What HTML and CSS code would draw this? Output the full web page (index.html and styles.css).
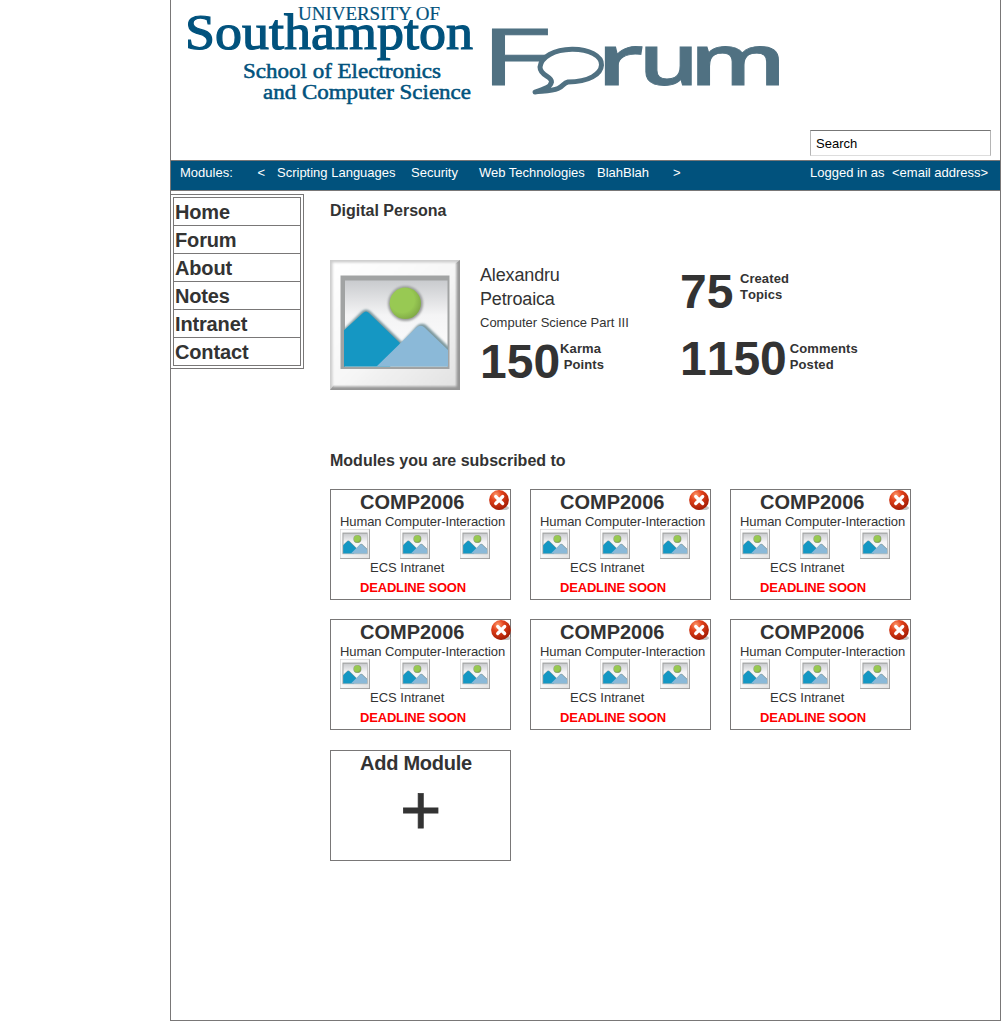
FILE: index.html
```html
<!DOCTYPE html>
<html lang="en">
<head>
<meta charset="utf-8">
<title>Forum - Digital Persona</title>
<link rel="stylesheet" href="styles.css">
</head>
<body>
<svg class="defs" aria-hidden="true">
  <defs>
    <linearGradient id="frame" x1="0" y1="0" x2="1" y2="1"><stop offset="0" stop-color="#fff"/><stop offset=".5" stop-color="#f7f7f7"/><stop offset="1" stop-color="#e2e2e2"/></linearGradient>
    <linearGradient id="sky" x1="0" y1="0" x2="0" y2="1"><stop offset="0" stop-color="#c9cbce"/><stop offset=".4" stop-color="#f4f4f5"/><stop offset="1" stop-color="#fff"/></linearGradient>
    <radialGradient id="sun" cx=".4" cy=".4" r=".65"><stop offset=".6" stop-color="#98c953"/><stop offset="1" stop-color="#7fa845"/></radialGradient>
    <radialGradient id="red" cx=".35" cy=".25" r=".75"><stop offset="0" stop-color="#ff9a6c"/><stop offset=".4" stop-color="#e2421c"/><stop offset="1" stop-color="#a51c04"/></radialGradient>
    <filter id="soft" x="-20%" y="-20%" width="140%" height="140%"><feGaussianBlur stdDeviation="1.2"/></filter>
    <clipPath id="window"><path d="M14 20H118V106.500H14z"/></clipPath>
    <clipPath id="outer"><path d="M0 0H130V130H0z"/></clipPath>
  </defs>
  <symbol id="picture" viewBox="0 0 130 130">
    <path fill="#cdcdcd" d="M0 0H130V130H0z"/>
    <path fill="#969696" d="M130 0V130H0l4-5H125V4z"/>
    <path fill="url(#frame)" filter="url(#soft)" clip-path="url(#outer)" d="M2.500 2.500H126.500V126.500H2.500z"/>
    <path fill="#a1a3a3" d="M10.500 15.500H119.500V109H10.500z"/>
    <path fill="url(#sky)" d="M15 20.500H117.500V107H15z"/>
    <circle cx="75.500" cy="43.500" r="17.500" fill="#9b9d9d" filter="url(#soft)"/>
    <circle cx="75.300" cy="43.300" r="15.700" fill="url(#sun)"/>
    <g clip-path="url(#window)">
      <path fill="#7e999f" filter="url(#soft)" d="M10 73L32 51Q36 48 40 51L72 82L84 69Q90 61 96 65L121 89V110H10z"/>
      <path fill="#1597c3" d="M12 72L33 53Q36 50 39 53L70 83L60 107H13z"/>
      <path fill="#8bb9d8" d="M46 107L86 68Q90 64 94 67L118 90V107z"/>
    </g>
  </symbol>
  <symbol id="remove" viewBox="0 0 20 20">
    <ellipse cx="13" cy="18" rx="7" ry="2.500" fill="#999" opacity=".6"/>
    <circle cx="10" cy="10" r="9.900" fill="url(#red)"/>
    <path d="M6.700 6.500l7 7M13.700 6.500l-7 7" stroke="#fff" stroke-width="3.200" stroke-linecap="round"/>
  </symbol>
</svg>

<div class="page">
  <header class="header">
    <svg class="logo" width="620" height="110" viewBox="0 0 620 110">
      <g class="university">
        <text class="uni-small" x="127" y="20" textLength="142" lengthAdjust="spacingAndGlyphs">UNIVERSITY OF</text>
        <text class="uni-name" x="14" y="49" textLength="288" lengthAdjust="spacingAndGlyphs">Southampton</text>
        <text class="uni-school" x="72" y="78" textLength="198" lengthAdjust="spacingAndGlyphs">School of Electronics</text>
        <text class="uni-school" x="92" y="99" textLength="208" lengthAdjust="spacingAndGlyphs">and Computer Science</text>
      </g>
      <g class="forum">
        <text class="forum-f" transform="translate(308.500 84.500) scale(1.750 1)">F</text>
        <text class="forum-rum" transform="translate(425.500 84.500) scale(1.570 1)">r</text>
        <text class="forum-rum" transform="translate(467.500 84.500) scale(1.360 1)">u</text>
        <text class="forum-rum" transform="translate(518.500 84.500) scale(1.450 1)">m</text>
        <path class="bubble" d="M401 49.200C418 49 431 56 430.500 65C430 74 418 82 397 82C392 83 393 86 387 88.500C381 91 372 91 364 92C373 89 379 88 380.500 82C381 76 369 76 369 67C370 57 383 49.500 401 49.200z"/>
      </g>
    </svg>
    <input class="search" type="text" value="Search" aria-label="Search">
  </header>

  <nav class="modules">
    <span>Modules:</span><span>&lt;</span><span>Scripting Languages</span><span>Security</span><span>Web Technologies</span><span>BlahBlah</span><span>&gt;</span><span>Logged in as</span><span>&lt;email address&gt;</span>
  </nav>

  <div class="body">
    <aside>
      <div class="menu">
        <ul>
          <li>Home</li><li>Forum</li><li>About</li><li>Notes</li><li>Intranet</li><li>Contact</li>
        </ul>
      </div>
    </aside>
    <main>
      <h2>Digital Persona</h2>
      <section class="profile">
        <svg class="avatar"><use href="#picture"/></svg>
        <div class="person">
          <div class="name">Alexandru<br>Petroaica</div>
          <div class="course">Computer Science Part III</div>
          <div class="stat"><b>150</b><span>Karma<br>&nbsp;Points</span></div>
        </div>
        <div class="totals">
          <div class="stat topics"><b>75</b><span>Created<br>Topics</span></div>
          <div class="stat comments"><b>1150</b><span>Comments<br>Posted</span></div>
        </div>
      </section>
      <h2 class="subscribed">Modules you are subscribed to</h2>
      <section class="cards">
        <article class="card"><h3>COMP2006</h3><svg class="remove"><use href="#remove"/></svg><p class="subject">Human Computer-Interaction</p><div class="pics"><svg><use href="#picture"/></svg><svg><use href="#picture"/></svg><svg><use href="#picture"/></svg></div><p class="source">ECS Intranet</p><p class="deadline">DEADLINE SOON</p></article>
        <article class="card"><h3>COMP2006</h3><svg class="remove"><use href="#remove"/></svg><p class="subject">Human Computer-Interaction</p><div class="pics"><svg><use href="#picture"/></svg><svg><use href="#picture"/></svg><svg><use href="#picture"/></svg></div><p class="source">ECS Intranet</p><p class="deadline">DEADLINE SOON</p></article>
        <article class="card"><h3>COMP2006</h3><svg class="remove"><use href="#remove"/></svg><p class="subject">Human Computer-Interaction</p><div class="pics"><svg><use href="#picture"/></svg><svg><use href="#picture"/></svg><svg><use href="#picture"/></svg></div><p class="source">ECS Intranet</p><p class="deadline">DEADLINE SOON</p></article>
        <article class="card"><h3>COMP2006</h3><svg class="remove edge"><use href="#remove"/></svg><p class="subject">Human Computer-Interaction</p><div class="pics"><svg><use href="#picture"/></svg><svg><use href="#picture"/></svg><svg><use href="#picture"/></svg></div><p class="source">ECS Intranet</p><p class="deadline">DEADLINE SOON</p></article>
        <article class="card"><h3>COMP2006</h3><svg class="remove"><use href="#remove"/></svg><p class="subject">Human Computer-Interaction</p><div class="pics"><svg><use href="#picture"/></svg><svg><use href="#picture"/></svg><svg><use href="#picture"/></svg></div><p class="source">ECS Intranet</p><p class="deadline">DEADLINE SOON</p></article>
        <article class="card"><h3>COMP2006</h3><svg class="remove"><use href="#remove"/></svg><p class="subject">Human Computer-Interaction</p><div class="pics"><svg><use href="#picture"/></svg><svg><use href="#picture"/></svg><svg><use href="#picture"/></svg></div><p class="source">ECS Intranet</p><p class="deadline">DEADLINE SOON</p></article>
        <article class="card add"><h3>Add Module</h3><div class="plus">+</div></article>
      </section>
    </main>
  </div>
</div>
</body>
</html>
```
FILE: styles.css
```css
* { box-sizing: border-box; }
body {
  margin: 0;
  background: #fff;
  color: #333;
  font: 13px/16px "Liberation Sans", Arial, sans-serif;
}
h2, h3, p, ul { margin: 0; padding: 0; }
svg { display: block; }
.defs { position: absolute; width: 0; height: 0; }

.page {
  width: 831px;
  height: 1021px;
  margin-left: 170px;
  border: 1px solid #797777;
  border-top: 0;
}

.header {
  height: 160px;
  display: flex;
  flex-direction: column;
  justify-content: space-between;
  padding: 0 9px 4px 0;
}
.university { fill: #01527d; stroke: #01527d; font-family: "Liberation Serif", serif; }
.uni-small { font-size: 19px; stroke-width: .2px; }
.uni-name { font-size: 50px; stroke-width: 1.2px; }
.uni-school { font-size: 20px; stroke-width: .5px; }
.forum { fill: #507182; stroke: #507182; font-family: "Open Sans", sans-serif; font-weight: 600; }
.forum-f { font-size: 78px; font-weight: 400; stroke-width: 1px; }
.forum-rum { font-size: 70px; stroke-width: .8px; }
.bubble { fill: #fff; stroke-width: 5px; stroke-linejoin: round; }

.search {
  align-self: flex-end;
  width: 181px;
  height: 26px;
  padding: 0 5px;
  border: 1px solid #b5b5b5;
  border-top-color: #777;
  border-bottom-color: #ddd;
  border-radius: 0;
  background: #fff;
  color: #000;
  font: inherit;
}

.modules {
  height: 31px;
  display: grid;
  grid-template-columns: 77.5px 19.5px 134px 68px 118px 76px 137px 82px auto;
  padding: 4px 0 0 9px;
  border: solid #797777;
  border-width: 1px 0;
  background: #01527d;
  color: #fff;
  white-space: nowrap;
}

.body { display: grid; grid-template-columns: 159px 1fr; }
.menu {
  width: 134px;
  margin: 3px 0 0 -1px;
  padding: 2px;
  border: 1px solid #797777;
}
.menu ul { width: 128px; border: 1px solid #797777; list-style: none; }
.menu li {
  padding: 2px 0 0 1px;
  font: bold 20px/25px "Liberation Sans", Arial, sans-serif;
  letter-spacing: -.15px;
}
.menu li + li { border-top: 1px solid #797777; }

main { padding-top: 10px; }
h2 { font-size: 16px; line-height: 20px; }
.subscribed { padding-top: 1px; }

.profile { display: flex; height: 190px; margin-top: 39px; }
.avatar { width: 130px; height: 130px; }
.person { width: 200px; margin-left: 20px; padding-top: 3px; }
.name { font-size: 18px; line-height: 24px; letter-spacing: -.15px; }
.course { margin-top: 4px; }
.stat { display: flex; font-weight: bold; }
.stat b { font-size: 48px; line-height: 54px; font-kerning: none; }
.stat span { letter-spacing: .1px; font-kerning: none; }
.person .stat { margin-top: 4px; }
.person .stat span { padding-top: 6px; }
.topics { padding-top: 5px; }
.topics span { margin: 6px 0 0 6.5px; }
.comments { margin-top: 13px; }
.comments span { margin: 9px 0 0 3px; }

.cards {
  display: grid;
  grid-template-columns: repeat(3, 181px);
  gap: 19px;
  margin-top: 18px;
}
.card {
  position: relative;
  height: 111px;
  padding-left: 9px;
  border: 1px solid #797777;
  white-space: nowrap;
}
h3 { padding-left: 20px; font-size: 20px; line-height: 24px; }
.remove { position: absolute; top: 0; right: 1px; width: 20px; height: 20px; }
.remove.edge { right: -1px; }
.subject { line-height: 15px; letter-spacing: -.1px; }
.pics { display: flex; gap: 30px; }
.pics svg { width: 30px; height: 30px; }
.source { padding: 1px 0 0 30px; }
.deadline { margin-top: 4px; padding-left: 20px; color: #f00; font-weight: bold; letter-spacing: -.18px; }
.add { margin-top: 1px; }
.add h3 { letter-spacing: -.25px; }
.plus { padding-left: 60px; font-size: 71px; line-height: 70px; -webkit-text-stroke: .8px #333; }
```
